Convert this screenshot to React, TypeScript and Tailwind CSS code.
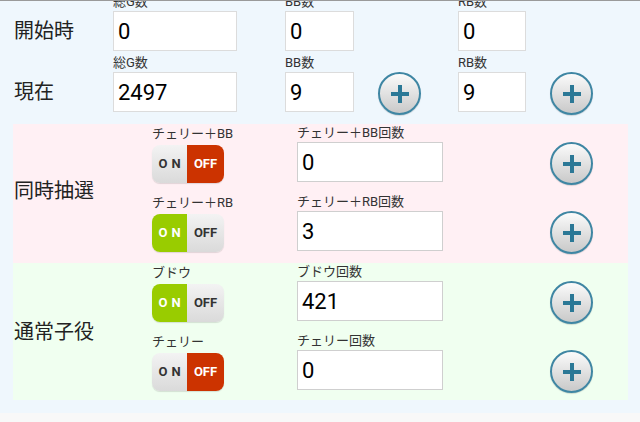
import React from 'react';

const FONT = "font-[Roboto,'Noto_Sans_CJK_JP',sans-serif]";

const PlusButton = () => {
  return (
    <div className="flex size-[43px] items-center justify-center rounded-full border-2 border-[#3f86a3] bg-gradient-to-b from-[#fbfbfb] to-[#c9c9c9] shadow-[0_1px_1px_rgba(0,0,0,0.15)]">
      <svg width="20" height="20" viewBox="0 0 20 20">
        <path d="M10 1v18M1 10h18" stroke="#2b7896" strokeWidth="4" />
      </svg>
    </div>
  );
};

const Toggle = ({ on }: { on: boolean }) => {
  return (
    <div className="flex h-[38px] w-[72px] overflow-hidden rounded-[8px] text-[13px] font-bold shadow-[0_1px_1px_rgba(0,0,0,0.12)]">
      <div
        className={
          on
            ? 'flex w-[35px] items-center justify-center bg-[#99cc00] pl-[4px] tracking-[4px] text-white'
            : 'flex w-[35px] items-center justify-center bg-gradient-to-b from-[#f3f3f3] to-[#dadada] pl-[4px] tracking-[4px] text-[#333]'
        }
      >
        ON
      </div>
      <div
        className={
          on
            ? 'flex flex-1 items-center justify-center bg-gradient-to-b from-[#f3f3f3] to-[#dadada] text-[#333]'
            : 'flex flex-1 items-center justify-center bg-[#cc3300] text-white'
        }
      >
        OFF
      </div>
    </div>
  );
};

const HeaderField = ({ label, value, className }: { label: string; value: string; className: string }) => {
  return (
    <div className={`flex flex-col ${className}`}>
      <div className="h-[19px] text-[13px] leading-[19px] text-[#333]">{label}</div>
      <div className="flex h-[40px] items-center border border-[#dcdcdc] bg-white pl-[4px] text-[22px] text-black">
        {value}
      </div>
    </div>
  );
};

const HeaderRow = ({
  title,
  values,
  withPlus,
  className,
}: {
  title: string;
  values: [string, string, string];
  withPlus: boolean;
  className: string;
}) => {
  return (
    <div className={`flex h-[59px] ${className}`}>
      <div className="mt-[19px] flex h-[40px] w-[113px] items-center pl-[14px] text-[20px] text-[#222]">{title}</div>
      <HeaderField label="総G数" value={values[0]} className="w-[124px]" />
      <div className="w-[48px]" />
      <HeaderField label="BB数" value={values[1]} className="w-[69px]" />
      <div className="w-[104px] pl-[24px] pt-[19px]">{withPlus && <PlusButton />}</div>
      <HeaderField label="RB数" value={values[2]} className="w-[68px]" />
      <div className="pl-[24px] pt-[19px]">{withPlus && <PlusButton />}</div>
    </div>
  );
};

const SubRow = ({ toggleLabel, on, inputLabel, value }: { toggleLabel: string; on: boolean; inputLabel: string; value: string }) => {
  return (
    <div className="flex h-[69px] shrink-0">
      <div className="flex w-[145px] flex-col pt-[1px]">
        <div className="h-[20px] text-[13px] leading-[18px] text-[#333]">{toggleLabel}</div>
        <Toggle on={on} />
      </div>
      <div className="flex w-[146px] flex-col">
        <div className="h-[18px] text-[13px] leading-[18px] text-[#333]">{inputLabel}</div>
        <div className="flex h-[40px] items-center border border-[#cfcfcf] bg-white pl-[4px] text-[22px] text-black">
          {value}
        </div>
      </div>
      <div className="pl-[107px] pt-[18px]">
        <PlusButton />
      </div>
    </div>
  );
};

const Section = ({
  title,
  className,
  titleClassName,
  children,
}: {
  title: string;
  className: string;
  titleClassName: string;
  children: React.ReactNode;
}) => {
  return (
    <div className={`ml-[13px] flex w-[615px] shrink-0 overflow-hidden ${className}`}>
      <div className={`flex w-[139px] items-center pl-[1px] text-[20px] text-[#222] ${titleClassName}`}>{title}</div>
      <div className="flex flex-col">{children}</div>
    </div>
  );
};

export default function App() {
  return (
    <div className={`flex h-[422px] w-[640px] flex-col overflow-hidden border-t border-[#9a9a9a] bg-[#eff7fd] ${FONT}`}>
      <HeaderRow title="開始時" values={['0', '0', '0']} withPlus={false} className="-mt-[9px]" />
      <HeaderRow title="現在" values={['2497', '9', '9']} withPlus={true} className="mt-[2px]" />

      <Section title="同時抽選" className="mt-[12px] h-[139px] bg-[#fff0f4]" titleClassName="pb-[6px]">
        <SubRow toggleLabel="チェリー＋BB" on={false} inputLabel="チェリー＋BB回数" value="0" />
        <SubRow toggleLabel="チェリー＋RB" on={true} inputLabel="チェリー＋RB回数" value="3" />
      </Section>

      <Section title="通常子役" className="h-[137px] bg-[#f0fff0]" titleClassName="">
        <SubRow toggleLabel="ブドウ" on={true} inputLabel="ブドウ回数" value="421" />
        <SubRow toggleLabel="チェリー" on={false} inputLabel="チェリー回数" value="0" />
      </Section>

      <div className="mt-auto h-[9px] bg-[#f8f8f8]" />
    </div>
  );
}
